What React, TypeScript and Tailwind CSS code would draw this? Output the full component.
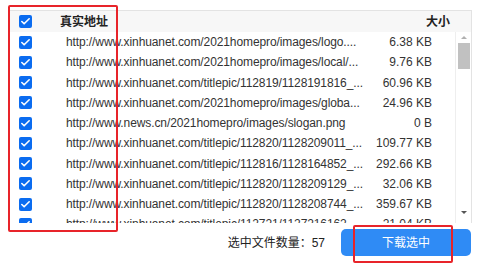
import { Check } from "lucide-react";

const ROWS = [
  { url: "http://www.xinhuanet.com/2021homepro/images/logo....", size: "6.38 KB" },
  { url: "http://www.xinhuanet.com/2021homepro/images/local/...", size: "9.76 KB" },
  { url: "http://www.xinhuanet.com/titlepic/112819/1128191816_...", size: "60.96 KB" },
  { url: "http://www.xinhuanet.com/2021homepro/images/globa...", size: "24.96 KB" },
  { url: "http://www.news.cn/2021homepro/images/slogan.png", size: "0 B" },
  { url: "http://www.xinhuanet.com/titlepic/112820/1128209011_...", size: "109.77 KB" },
  { url: "http://www.xinhuanet.com/titlepic/112816/1128164852_...", size: "292.66 KB" },
  { url: "http://www.xinhuanet.com/titlepic/112820/1128209129_...", size: "32.06 KB" },
  { url: "http://www.xinhuanet.com/titlepic/112820/1128208744_...", size: "359.67 KB" },
  { url: "http://www.xinhuanet.com/titlepic/112721/1127216162_...", size: "21.04 KB" },
];

function Box() {
  return (
    <span className="flex h-[13px] w-[13px] items-center justify-center rounded-[2px] bg-[#0b6cf0]">
      <Check size={11} strokeWidth={3.5} className="text-white" />
    </span>
  );
}

export default function App() {
  return (
    <div
      className="relative h-[270px] w-[480px] overflow-hidden bg-white text-[#333]"
      style={{ fontFamily: '"Liberation Sans", "Noto Sans CJK SC", sans-serif' }}
    >
      <div className="px-[8px] pt-[10px]">
        {/* table */}
        <div className="relative h-[213px] overflow-hidden border-t border-r border-[#e3e3e3]">
          <div className="flex h-[21px] items-center bg-[#f7f7f7] text-[12px] font-bold text-[#222]">
            <span className="ml-[11px] w-[41px]"><Box /></span>
            <span className="w-[366px]">真实地址</span>
            <span>大小</span>
          </div>
          {ROWS.map((r, i) => (
            <div key={i} className="flex h-[20.25px] items-center text-[12px] leading-[20px]">
              <span className="ml-[11px] w-[47px]"><Box /></span>
              <span className="w-[303px] whitespace-nowrap overflow-hidden tracking-[-0.1px]">{r.url}</span>
              <span className="w-[63px] text-right whitespace-nowrap">{r.size}</span>
            </div>
          ))}
          {/* scrollbar */}
          <div className="absolute right-0 top-[21px] bottom-0 flex w-[16px] flex-col items-center bg-white border-l border-[#eee]">
            <span className="mt-[4px] h-0 w-0 border-x-[3px] border-b-[3px] border-x-transparent border-b-[#b0b0b0]" />
            <span className="mt-[4px] h-[26px] w-[12px] bg-[#c1c1c1]" />
            <span className="mt-auto mb-[9px] h-0 w-0 border-x-[3px] border-t-[3px] border-x-transparent border-t-[#555]" />
          </div>
        </div>
      </div>

      {/* footer */}
      <div className="mt-[6px] flex items-center justify-end pr-[9px]">
        <span className="mr-[16px] text-[12px] text-[#222]">选中文件数量：57</span>
        <button className="flex h-[27px] w-[130px] items-center justify-center rounded-[5px] bg-[#2f8bf5] text-[12px] text-white">
          下载选中
        </button>
      </div>

      {/* red annotations */}
      <div className="pointer-events-none absolute left-[8px] top-[5px] h-[227px] w-[110px] rounded-[2px] border-2 border-[#e8242a]" />
      <div className="pointer-events-none absolute left-[353px] top-[225px] h-[38px] w-[100px] rounded-[2px] border-2 border-[#e8242a]" />
    </div>
  );
}
